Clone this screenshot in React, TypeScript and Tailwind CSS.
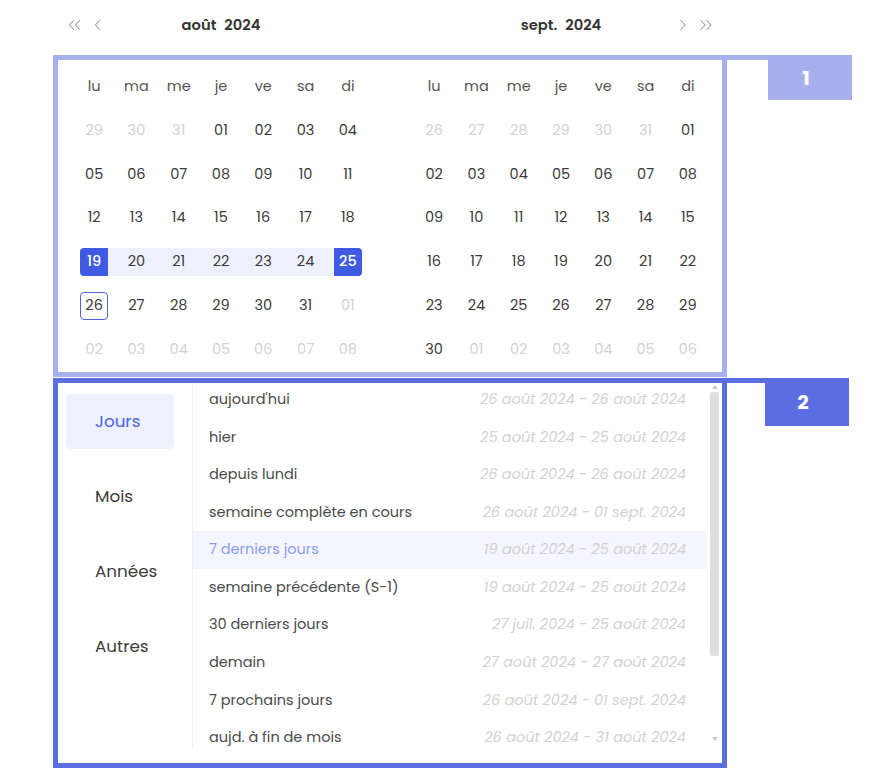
import React from "react";

type Day = { n: number; muted?: boolean };

const WEEK = ["lu", "ma", "me", "je", "ve", "sa", "di"];

function range(a: number, b: number, muted = false): Day[] {
  const out: Day[] = [];
  for (let i = a; i <= b; i++) out.push({ n: i, muted });
  return out;
}

const AUGUST: Day[] = [...range(29, 31, true), ...range(1, 31), ...range(1, 8, true)];
const SEPTEMBER: Day[] = [...range(26, 31, true), ...range(1, 30), ...range(1, 6, true)];

const pad = (n: number) => (n < 10 ? `0${n}` : `${n}`);

const PRESETS: [string, string][] = [
  ["aujourd'hui", "26 août 2024 - 26 août 2024"],
  ["hier", "25 août 2024 - 25 août 2024"],
  ["depuis lundi", "26 août 2024 - 26 août 2024"],
  ["semaine complète en cours", "26 août 2024 - 01 sept. 2024"],
  ["7 derniers jours", "19 août 2024 - 25 août 2024"],
  ["semaine précédente (S-1)", "19 août 2024 - 25 août 2024"],
  ["30 derniers jours", "27 juil. 2024 - 25 août 2024"],
  ["demain", "27 août 2024 - 27 août 2024"],
  ["7 prochains jours", "26 août 2024 - 01 sept. 2024"],
  ["aujd. à fin de mois", "26 août 2024 - 31 août 2024"],
];

const TABS = ["Jours", "Mois", "Années", "Autres"];

function DayCell({ d, sel }: { d: Day; sel?: { start: number; end: number; today: number } }) {
  const active = !d.muted && sel;
  const isStart = active && d.n === sel!.start;
  const isEnd = active && d.n === sel!.end;
  const inRange = active && d.n > sel!.start && d.n < sel!.end;
  const isToday = active && d.n === sel!.today;

  let band = "";
  if (inRange) band = "bg-[#eef1fd]";
  if (isStart) band = "bg-[linear-gradient(to_right,transparent_50%,#eef1fd_50%)]";
  if (isEnd) band = "bg-[linear-gradient(to_right,#eef1fd_50%,transparent_50%)]";

  let inner = "w-[28px] h-[28px] flex items-center justify-center text-[14.5px] ";
  if (isStart) inner += "bg-[#3e5be2] text-white font-medium rounded-l-[4px]";
  else if (isEnd) inner += "bg-[#3e5be2] text-white font-medium rounded-r-[4px]";
  else if (isToday) inner += "border border-[#4d63e2] rounded-[4px] text-[#3a3a3a]";
  else if (d.muted) inner += "text-[#d2d2d2]";
  else inner += "text-[#3a3a3a]";

  return (
    <div className="h-[43.8px] flex items-center">
      <div className={`w-full h-[28px] flex justify-center ${band}`}>
        <div className={inner}>{pad(d.n)}</div>
      </div>
    </div>
  );
}

function Month({ days, sel }: { days: Day[]; sel?: { start: number; end: number; today: number } }) {
  return (
    <div className="w-[296px] grid grid-cols-7">
      {WEEK.map((w) => (
        <div key={w} className="h-[43.8px] flex items-center justify-center text-[14.5px] text-[#555]">
          {w}
        </div>
      ))}
      {days.map((d, i) => (
        <DayCell key={i} d={d} sel={sel} />
      ))}
    </div>
  );
}

function Chevron({ dir, double }: { dir: "l" | "r"; double?: boolean }) {
  const p = dir === "l" ? "M6 1 L1.5 6 L6 11" : "M1.5 1 L6 6 L1.5 11";
  return (
    <svg width={double ? 14 : 8} height="12" viewBox={double ? "0 0 14 12" : "0 0 8 12"} fill="none" stroke="#a0a0a0" strokeWidth="1.1">
      <path d={p} />
      {double && <path d={p} transform="translate(6 0)" />}
    </svg>
  );
}

function Tag({ n, color, w, h }: { n: string; color: string; w: string; h: string }) {
  return (
    <div className={`absolute left-full -top-[5px] flex flex-col ${w} ${h}`}>
      <div className={`h-[5px] w-full ${color}`} />
      <div className="flex-1 flex justify-end -mt-[5px]">
        <div className={`w-[84px] h-full ${color} flex items-center justify-center pr-[8px] text-white text-[20px] font-bold`}>
          {n}
        </div>
      </div>
    </div>
  );
}

export default function App() {
  return (
    <div
      className="w-[892px] h-[782px] bg-white overflow-hidden"
      style={{ fontFamily: '"Poppins", "Noto Sans", "Open Sans", sans-serif' }}
    >
      <div className="pl-[53px] pt-[12px]">
        {/* month navigation */}
        <div className="w-[674px] h-[26px] flex pl-[20px] gap-[44px] text-[14.7px] text-[#333]">
          <div className="w-[296px] grid grid-cols-[1fr_auto_1fr] items-center">
            <div className="flex items-center gap-[12px] -ml-[5px]">
              <Chevron dir="l" double />
              <Chevron dir="l" />
            </div>
            <div className="font-semibold flex gap-[8px]">
              <span>août</span>
              <span>2024</span>
            </div>
            <div />
          </div>
          <div className="w-[296px] grid grid-cols-[1fr_auto_1fr] items-center">
            <div />
            <div className="font-semibold flex gap-[8px]">
              <span>sept.</span>
              <span>2024</span>
            </div>
            <div className="flex items-center justify-end gap-[12px] -mr-[4px]">
              <Chevron dir="r" />
              <Chevron dir="r" double />
            </div>
          </div>
        </div>

        {/* calendars */}
        <div className="relative mt-[17px] w-[674px] h-[322px] border-[5px] border-[#a7afee] bg-white">
          <div className="flex pl-[15px] pt-[5px] gap-[44px]">
            <Month days={AUGUST} sel={{ start: 19, end: 25, today: 26 }} />
            <Month days={SEPTEMBER} />
          </div>
          <Tag n="1" color="bg-[#a7afee]" w="w-[130px]" h="h-[45px]" />
        </div>

        {/* quick ranges */}
        <div className="relative mt-[1px] w-[674px] h-[390px] border-[5px] border-[#5a6ee2] bg-white flex">
          <div className="w-[135px] h-[365px] border-r border-[#f0f0f2] pl-[8px] pt-[11px] flex flex-col gap-[20px]">
            {TABS.map((t, i) => (
              <div
                key={t}
                className={`w-[108px] h-[55px] rounded-[5px] flex items-center pl-[29px] text-[16.8px] ${
                  i === 0 ? "bg-[#eef0fd] text-[#4b62e3]" : "text-[#3c3c3c]"
                }`}
              >
                {t}
              </div>
            ))}
          </div>
          <div className="flex-1 flex h-[370px] overflow-hidden">
            <div className="flex-1 -mt-[2px]">
              {PRESETS.map(([label, dates], i) => (
                <div
                  key={label}
                  className={`h-[37.6px] flex items-center justify-between pl-[16px] pr-[21px] text-[14.5px] ${
                    i === 4 ? "bg-[#f5f6fd]" : ""
                  }`}
                >
                  <span className={i === 4 ? "text-[#8b9cf0]" : "text-[#4a4a4a]"}>{label}</span>
                  <span className="italic text-[#d2d2d2]">{dates}</span>
                </div>
              ))}
            </div>
            <div className="w-[15px] flex flex-col items-center pt-[2px]">
              <svg width="6" height="4" viewBox="0 0 6 4">
                <path d="M0 4 L3 0 L6 4 Z" fill="#c8c8c8" />
              </svg>
              <div className="mt-[3px] w-[9px] h-[264px] rounded-[2px] bg-[#dedede]" />
              <div className="flex-1" />
              <svg width="6" height="4" viewBox="0 0 6 4" className="mb-[12px]">
                <path d="M0 0 L3 4 L6 0 Z" fill="#c8c8c8" />
              </svg>
            </div>
          </div>
          <Tag n="2" color="bg-[#5a6ee2]" w="w-[127px]" h="h-[48px]" />
        </div>
      </div>
    </div>
  );
}
